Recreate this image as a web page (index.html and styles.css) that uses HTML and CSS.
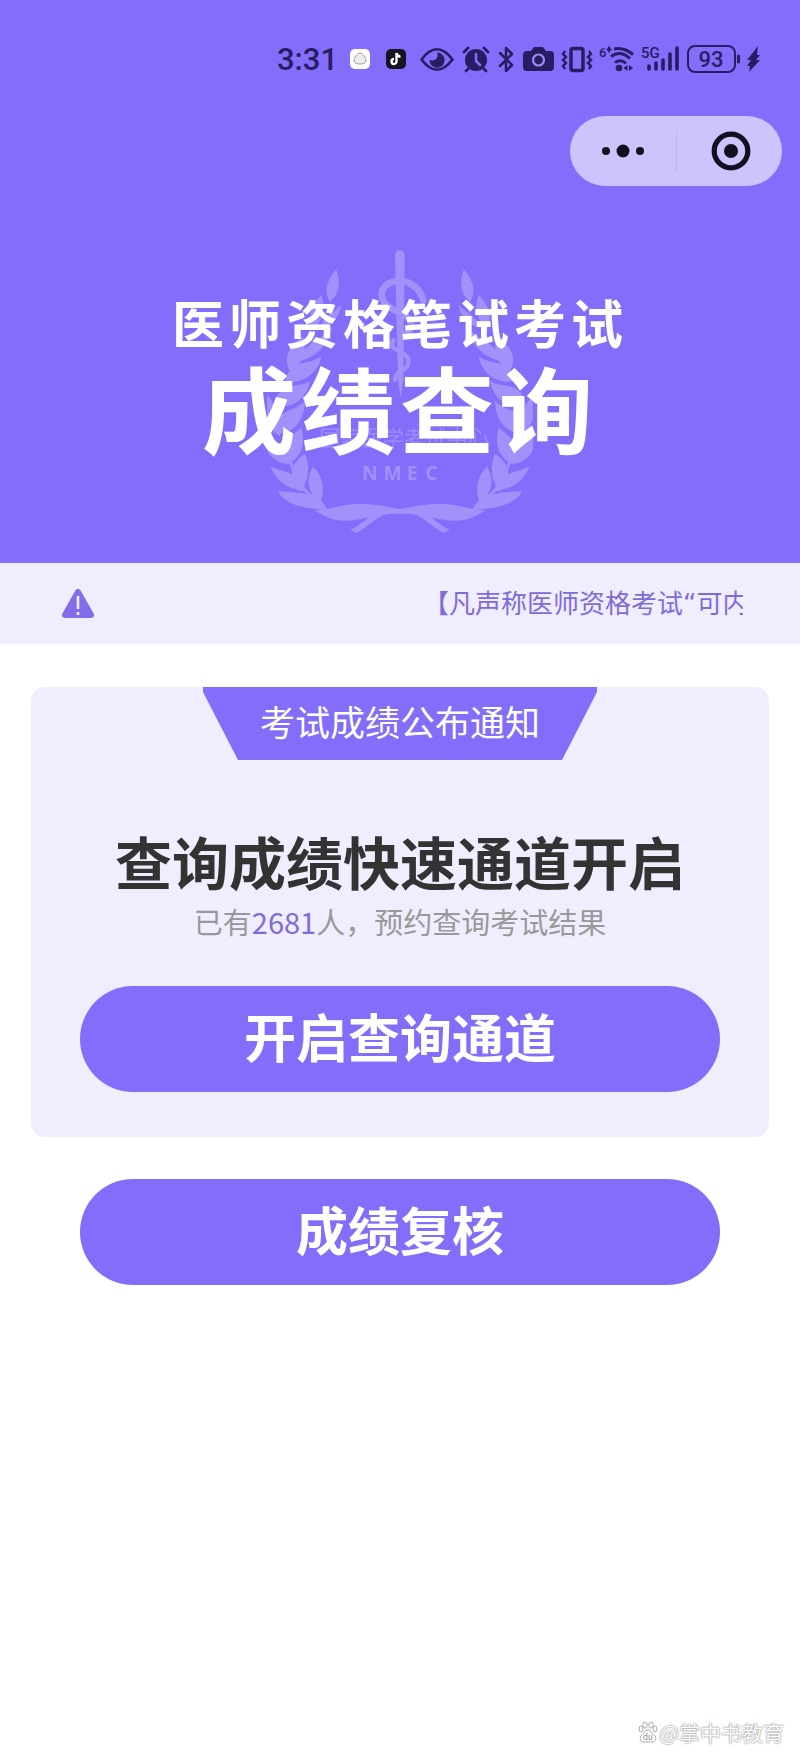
FILE: index.html
```html
<!DOCTYPE html>
<html lang="zh-CN">
<head>
  <meta charset="UTF-8">
  <meta name="viewport" content="width=device-width, initial-scale=1.0">
  <title>成绩查询</title>
  <link rel="stylesheet" href="styles.css">
</head>
<body>
  <header class="header">
    <div class="status-bar">
      <span class="time">3:31</span>
      <svg width="30" height="30" viewBox="0 0 30 30">
        <rect x="0" y="4" width="20" height="20" rx="5" fill="#fff"/>
        <path d="M10 8c3 0 6 5 6 8 0 4-12 4-12 0 0-3 3-8 6-8z" fill="#e8eceb" stroke="#b49c94" stroke-width="1"/>
      </svg>
      <svg width="27" height="30" viewBox="0 0 27 30">
        <rect x="0" y="4" width="20" height="20" rx="5" fill="#17131f"/>
        <path d="M10.500 8v8.500a2.500 2.500 0 1 1-2.500-2.500M10.500 8c.3 2.500 1.800 3.500 4 3.700" fill="none" stroke="#fff" stroke-width="2.400"/>
      </svg>
      <svg width="36" height="30" viewBox="0 0 36 30">
        <path d="M2.500 14.500Q18-6 33.500 14.500Q18 35 2.500 14.500z" fill="none" stroke="#2a1c63" stroke-width="2.600"/>
        <path d="M18 7.500C20 12 17 17 10.500 15a7.600 7.600 0 1 0 7.500-7.500z" fill="#2a1c63"/>
      </svg>
      <svg width="30" height="30" viewBox="0 0 30 30">
        <circle cx="15" cy="15" r="11" fill="#2a1c63"/>
        <path d="M3 7l4-4M27 7l-4-4M7 24l-2 2M23 24l2 2" stroke="#2a1c63" stroke-width="2.800" stroke-linecap="round"/>
        <path d="M15 9v7l4 4" fill="none" stroke="#836dfa" stroke-width="2.500" stroke-linecap="round"/>
      </svg>
      <svg width="18" height="30" viewBox="0 0 18 30">
        <path d="M3 8l12 12-6 6V3l6 6L3 21" fill="none" stroke="#2a1c63" stroke-width="2.500" stroke-linejoin="round" stroke-linecap="round"/>
      </svg>
      <svg width="34" height="30" viewBox="0 0 34 30">
        <path d="M6 6h4l3-4h9l3 4h4q4 0 4 4v12q0 4-4 4H6q-4 0-4-4V10q0-4 4-4z" fill="#2a1c63"/>
        <circle cx="17.500" cy="15" r="5.500" fill="none" stroke="#9c8cf0" stroke-width="2.200"/>
      </svg>
      <svg width="32" height="30" viewBox="0 0 32 30">
        <rect x="10" y="3.500" width="12" height="22" rx="2" fill="none" stroke="#2a1c63" stroke-width="3.500"/>
        <path d="M4 6l-2 3 3 3-3 3 3 3-3 3 2 3M28 6l2 3-3 3 3 3-3 3 3 3-2 3" fill="none" stroke="#2a1c63" stroke-width="2.400"/>
      </svg>
      <svg width="36" height="30" viewBox="0 0 36 30">
        <text x="0" y="12" class="wifi-label">6</text>
        <path d="M10 1.500v6M7.500 4.500h5" stroke="#2a1c63" stroke-width="1.800"/>
        <path d="M15 4q10-2 19 5.500M12 11.500q9-7 19 2M16 17.500q6-4 11 1" fill="none" stroke="#2a1c63" stroke-width="3"/>
        <circle cx="20" cy="23" r="3.300" fill="#2a1c63"/>
        <path d="M24.500 23l4-3v6zM34 23l-4-3v6z" fill="#2a1c63"/>
      </svg>
      <svg width="39" height="30" viewBox="0 0 39 30">
        <text x="0" y="13" class="net-label">5G</text>
        <path d="M8 21v3M15 18v6M22 15v9M29 9v15M36 3v21" stroke="#2a1c63" stroke-width="3.600" stroke-linecap="round"/>
      </svg>
      <svg width="54" height="30" viewBox="0 0 54 30">
        <rect x="2" y="1" width="47" height="26" rx="7" fill="none" stroke="#2a1c63" stroke-width="2"/>
        <path d="M52.500 11v6" stroke="#2a1c63" stroke-width="3" stroke-linecap="round"/>
        <text x="25" y="22" text-anchor="middle" class="battery-label">93</text>
      </svg>
      <svg width="14" height="30" viewBox="0 0 14 30">
        <path d="M12 1L1 15h4l-4 6h3l-1 6L14 15h-4l4-5h-3z" fill="#2a1c63"/>
      </svg>
    </div>

    <div class="capsule">
      <button type="button" aria-label="更多">
        <svg width="44" height="40" viewBox="0 0 44 40">
          <circle cx="5" cy="20" r="4"/>
          <circle cx="22" cy="20" r="6.500"/>
          <circle cx="39" cy="20" r="4"/>
        </svg>
      </button>
      <button type="button" aria-label="关闭">
        <svg width="40" height="40" viewBox="0 0 40 40">
          <circle cx="20" cy="20" r="16.800" fill="none" stroke="#120f20" stroke-width="5.200"/>
          <circle cx="20" cy="20" r="7"/>
        </svg>
      </button>
    </div>

    <div class="hero">
      <svg class="emblem" viewBox="-400 0 800 930" aria-hidden="true">
        <defs>
          <!-- right half of the wreath, mirrored for the left -->
          <g id="branch">
            <path d="M192 86C224 125 228 155 211 185C184 163 176 130 192 86z"/>
            <path d="M236 165C276 200 274 240 262 270C232 240 222 210 236 165z"/>
            <path d="M176 192C195 218 232 225 238 262C205 255 182 232 176 192z"/>
            <path d="M292 288C335 320 357 355 326 400C291 365 277 330 292 288z"/>
            <path d="M205 260C230 300 280 300 302 355L296 362C250 345 215 320 205 260z"/>
            <path d="M236 348C270 378 327 353 345 422C300 437 245 402 236 348z"/>
            <path d="M270 422C310 448 365 420 378 495C325 510 281 478 270 422z"/>
            <path d="M398 465C417 520 397 560 362 590C345 545 367 510 398 465z"/>
            <path d="M285 482C320 520 383 505 380 580C325 585 290 552 285 482z"/>
            <path d="M297 563C330 595 374 610 334 672C290 645 285 605 297 563z"/>
            <path d="M404 580C415 645 370 673 332 673C335 620 375 605 404 580z"/>
            <path d="M286 642C320 665 346 700 300 755C272 720 270 680 286 642z"/>
            <path d="M390 679C365 740 320 747 286 755C293 695 350 700 390 679z"/>
            <path d="M262 680C282 715 282 750 242 795C224 755 229 710 262 680z"/>
            <path d="M368 755C335 805 270 805 218 812C233 760 310 755 368 755z"/>
            <path d="M330 660L318 705L282 755L225 806" fill="none" stroke="#a091fb" stroke-width="8"/>
            <path d="M0 808C50 800 65 792 130 793C180 795 210 810 256 812C225 830 205 843 165 843C105 842 70 820 0 822z"/>
            <path d="M25 820C70 825 100 867 132 880L150 871C120 858 100 832 70 823z"/>
          </g>
        </defs>
        <g fill="#a091fb">
          <use href="#branch"/>
          <use href="#branch" transform="scale(-1 1)"/>
          <path d="M-15 45Q-15 30 0 30Q14 30 14 45L10 420L2 475L-6 420z"/>
        </g>
        <g class="snake">
          <path d="M70 180C50 115 -10 115 -35 130C-72 155 -55 195 -10 213C35 230 55 265 5 287" stroke-width="20"/>
          <path d="M-20 300C-45 335 35 330 25 370C18 398 -15 390 -15 420" stroke-width="13"/>
        </g>
        <text x="12" y="618" text-anchor="middle" class="emblem-name">国家医学考试中心</text>
        <text x="-114 -50 20 76" y="721" class="emblem-code">NMEC</text>
      </svg>
      <h1 class="hero-title">
        <span class="hero-small">医师资格笔试考试</span>
        <span class="hero-large">成绩查询</span>
      </h1>
    </div>
  </header>

  <div class="notice">
    <svg width="34" height="34" viewBox="0 0 34 34">
      <path d="M17 5L30 28H4z" fill="#836de9" stroke="#836de9" stroke-width="6" stroke-linejoin="round"/>
      <path d="M17 9v13M17 25v3" stroke="#f0edff" stroke-width="2.600"/>
    </svg>
    <div class="marquee">
      <span>【凡声称医师资格考试“可内</span>
    </div>
  </div>

  <main class="content">
    <section class="card">
      <div class="ribbon">考试成绩公布通知</div>
      <h2>查询成绩快速通道开启</h2>
      <p>已有<span class="count">2681</span>人，预约查询考试结果</p>
      <button type="button" class="btn">开启查询通道</button>
    </section>
    <button type="button" class="btn btn-review">成绩复核</button>
  </main>

  <footer class="watermark">
    <svg width="20" height="22" viewBox="0 0 20 22">
      <g fill="#fff" stroke="#aaa" stroke-width="1">
        <ellipse cx="3" cy="8" rx="2" ry="3"/>
        <ellipse cx="7" cy="4" rx="2.200" ry="3"/>
        <ellipse cx="13" cy="4" rx="2.200" ry="3"/>
        <ellipse cx="17" cy="8" rx="2" ry="3"/>
        <path d="M10 9c3 0 4 4 7 6 2 3 0 6-3 6H6c-3 0-5-3-3-6 3-2 4-6 7-6z"/>
      </g>
      <text x="10" y="19" text-anchor="middle" class="paw-label">du</text>
    </svg>
    <span>@掌中书教育</span>
  </footer>
</body>
</html>
```

FILE: styles.css
```css
* {
  box-sizing: border-box;
}
body {
  font-family: "Noto Sans CJK SC", sans-serif;
  background: #fff;
  margin: 0;
  min-height: 100vh;
  display: flex;
  flex-direction: column;
}
h1, h2, p {
  margin: 0;
}
button {
  font-family: inherit;
  border: none;
  padding: 0;
  cursor: pointer;
}
.header {
  background: #836dfa;
  padding-top: 40px;
}
.status-bar {
  display: flex;
  justify-content: flex-end;
  align-items: center;
  gap: 6px;
  height: 40px;
  padding-right: 40px;
  color: #2a1c63;
}
.time {
  font-family: Roboto, sans-serif;
  font-size: 31px;
  font-weight: 500;
  line-height: 40px;
  margin-right: 6px;
}
.net-label,
.wifi-label,
.battery-label {
  font-family: Roboto, sans-serif;
  font-weight: 500;
  fill: #2a1c63;
}
.net-label {
  font-size: 15px;
}
.wifi-label {
  font-size: 13px;
}
.battery-label {
  font-size: 22px;
}
.capsule {
  display: flex;
  width: 212px;
  height: 70px;
  margin: 36px 18px 0 auto;
  background: #cdc4fd;
  border-radius: 35px;
}
.capsule button {
  flex: 1;
  display: flex;
  justify-content: center;
  align-items: center;
  background: none;
}
.capsule button + button::before {
  content: "";
  width: 1px;
  height: 42px;
  margin-right: 34px;
  background: #bdb2f3;
}
.capsule button + button {
  justify-content: flex-start;
}
.capsule svg {
  fill: #120f20;
}
.hero {
  position: relative;
  padding: 104px 0 105px;
  text-align: center;
}
.emblem {
  position: absolute;
  top: 54px;
  left: 50%;
  width: 266px;
  height: 310px;
  margin-left: -133px;
}
.snake {
  fill: none;
  stroke: #a091fb;
  stroke-linecap: round;
}
.emblem-name {
  font-size: 64px;
  fill: #9b8bfb;
}
.emblem-code {
  font-family: "Open Sans", sans-serif;
  font-size: 58px;
  font-weight: 700;
  fill: #a091fb;
}
.hero-title {
  position: relative;
  color: #fff;
  font-weight: 700;
}
.hero-small,
.hero-large {
  display: block;
}
.hero-small {
  font-size: 52px;
  line-height: 64px;
  letter-spacing: 5px;
}
.hero-large {
  font-size: 94px;
  line-height: 104px;
  letter-spacing: 5px;
}
.notice {
  display: flex;
  align-items: center;
  height: 81px;
  padding: 0 57px 0 61px;
  background: #f0edff;
}
.marquee {
  flex: 1;
  overflow: hidden;
  white-space: nowrap;
  padding-left: 328px;
  font-family: "DejaVu Sans", "Noto Sans CJK SC", sans-serif;
  font-size: 26px;
  line-height: 40px;
  color: #806cd8;
}
.content {
  padding: 43px 31px 0;
}
.card {
  display: flex;
  flex-direction: column;
  align-items: center;
  padding: 0 49px 45px;
  background: #f0edff;
  border-radius: 14px;
  text-align: center;
}
.ribbon {
  padding: 0 57px 6px;
  background: #836dfa;
  clip-path: polygon(0 0, 100% 0, 100% 5px, calc(100% - 35px) 100%, 35px 100%, 0 5px);
  color: #fff;
  font-size: 35px;
  line-height: 67px;
}
.card h2 {
  margin-top: 64px;
  font-size: 57px;
  font-weight: 700;
  line-height: 72px;
  color: #333;
}
.card p {
  margin-top: 3px;
  font-size: 29px;
  line-height: 44px;
  color: #999;
}
.count {
  color: #806cd8;
}
.btn {
  display: block;
  width: 100%;
  height: 106px;
  padding-bottom: 6px;
  border-radius: 53px;
  background: #836dfa;
  color: #fff;
  font-size: 52px;
  font-weight: 700;
  line-height: 72px;
}
.card .btn {
  margin-top: 43px;
}
.btn-review {
  width: auto;
  min-width: calc(100% - 98px);
  margin: 42px auto 0;
}
.watermark {
  display: flex;
  justify-content: flex-end;
  align-items: center;
  gap: 1px;
  margin-top: auto;
  padding: 0 16px 12px;
  font-size: 21px;
  line-height: 32px;
  color: #fff;
  text-shadow: 0 0 1px #777, 0 0 2px #999;
}
.paw-label {
  font-size: 8px;
  fill: #888;
  text-shadow: none;
}
```
